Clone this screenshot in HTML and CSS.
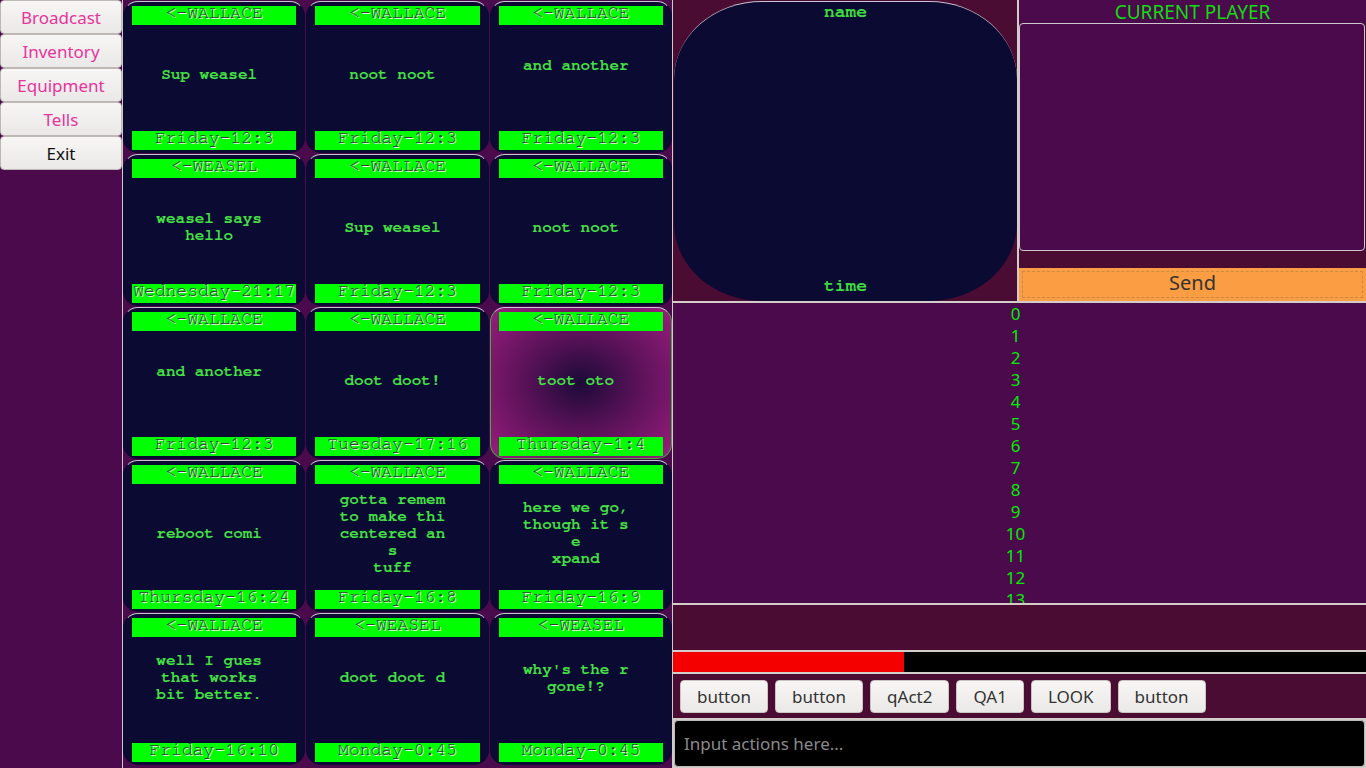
FILE: index.html
```html
<!DOCTYPE html>
<html lang="en">

<head>
    <meta charset="UTF-8">
    <meta name="viewport" content="width=device-width, initial-scale=1.0">
    <title>Chat</title>
    <link rel="stylesheet" href="styles.css">
</head>

<body>
    <div class="nav">
        <button class="nav-btn">Broadcast</button>
        <button class="nav-btn">Inventory</button>
        <button class="nav-btn">Equipment</button>
        <button class="nav-btn">Tells</button>
        <button class="nav-btn exit">Exit</button>
    </div>

    <div class="board">
        <div class="card">
            <div class="bar">&lt;-WALLACE</div>
            <div class="msg">Sup weasel</div>
            <div class="bar">Friday-12:3</div>
        </div>
        <div class="card">
            <div class="bar">&lt;-WALLACE</div>
            <div class="msg">noot noot</div>
            <div class="bar">Friday-12:3</div>
        </div>
        <div class="card">
            <div class="bar">&lt;-WALLACE</div>
            <div class="msg">and another<br>&nbsp;</div>
            <div class="bar">Friday-12:3</div>
        </div>

        <div class="card">
            <div class="bar">&lt;-WEASEL</div>
            <div class="msg">weasel says<br>hello</div>
            <div class="bar">Wednesday-21:17</div>
        </div>
        <div class="card">
            <div class="bar">&lt;-WALLACE</div>
            <div class="msg">Sup weasel</div>
            <div class="bar">Friday-12:3</div>
        </div>
        <div class="card">
            <div class="bar">&lt;-WALLACE</div>
            <div class="msg">noot noot</div>
            <div class="bar">Friday-12:3</div>
        </div>

        <div class="card">
            <div class="bar">&lt;-WALLACE</div>
            <div class="msg">and another<br>&nbsp;</div>
            <div class="bar">Friday-12:3</div>
        </div>
        <div class="card">
            <div class="bar">&lt;-WALLACE</div>
            <div class="msg">doot doot!</div>
            <div class="bar">Tuesday-17:16</div>
        </div>
        <div class="card selected">
            <div class="bar">&lt;-WALLACE</div>
            <div class="msg">toot oto</div>
            <div class="bar">Thursday-1:4</div>
        </div>

        <div class="card">
            <div class="bar">&lt;-WALLACE</div>
            <div class="msg">reboot comi</div>
            <div class="bar">Thursday-16:24</div>
        </div>
        <div class="card">
            <div class="bar">&lt;-WALLACE</div>
            <div class="msg">gotta remem<br>to make thi<br>centered an<br>s<br>tuff</div>
            <div class="bar">Friday-16:8</div>
        </div>
        <div class="card">
            <div class="bar">&lt;-WALLACE</div>
            <div class="msg">here we go,<br>though it s<br>e<br>xpand</div>
            <div class="bar">Friday-16:9</div>
        </div>

        <div class="card">
            <div class="bar">&lt;-WALLACE</div>
            <div class="msg">well I gues<br>that works<br>bit better.<br>&nbsp;</div>
            <div class="bar">Friday-16:10</div>
        </div>
        <div class="card">
            <div class="bar">&lt;-WEASEL</div>
            <div class="msg">doot doot d<br>&nbsp;</div>
            <div class="bar">Monday-0:45</div>
        </div>
        <div class="card">
            <div class="bar">&lt;-WEASEL</div>
            <div class="msg">why's the r<br>gone!?<br>&nbsp;</div>
            <div class="bar">Monday-0:45</div>
        </div>
    </div>

    <div class="side">
        <div class="top">
            <div class="name-panel">
                <div class="name-box">
                    <span>name</span>
                    <span>time</span>
                </div>
            </div>
            <div class="player-panel">
                <div class="player-title">CURRENT PLAYER</div>
                <textarea class="player-text"></textarea>
                <div class="player-gap"></div>
                <button class="send">Send</button>
            </div>
        </div>

        <div class="list">
            <div>0</div>
            <div>1</div>
            <div>2</div>
            <div>3</div>
            <div>4</div>
            <div>5</div>
            <div>6</div>
            <div>7</div>
            <div>8</div>
            <div>9</div>
            <div>10</div>
            <div>11</div>
            <div>12</div>
            <div>13</div>
        </div>

        <div class="strip"></div>

        <div class="progress">
            <div class="fill" style="width: 33.4%"></div>
        </div>

        <div class="actions">
            <button class="act">button</button>
            <button class="act">button</button>
            <button class="act">qAct2</button>
            <button class="act">QA1</button>
            <button class="act">LOOK</button>
            <button class="act">button</button>
        </div>

        <div class="input-row">
            <input type="text" class="command" placeholder="Input actions here...">
        </div>
    </div>
</body>
</html>
```

FILE: styles.css
```css
* {
    box-sizing: border-box;
}

body {
    margin: 0;
    height: 768px;
    overflow: hidden;
    display: flex;
    background-color: #4b0a4b;
    font-family: "Noto Sans", "Open Sans", sans-serif;
}

/* menu on the left */
.nav {
    width: 122px;
    display: flex;
    flex-direction: column;
}

.nav-btn {
    height: 34px;
    margin: 0;
    padding: 0;
    font-family: "Noto Sans", sans-serif;
    font-size: 17px;
    color: #e6349b;
    background: linear-gradient(#f7f6f5, #ebe9e7);
    border: 1px solid #bdb8b4;
    border-radius: 4px;
}

.nav-btn.exit {
    color: #111;
}

/* message cards */
.board {
    width: 551px;
    height: 768px;
    border-left: 1px solid #cfcac6;
    border-right: 1px solid #cfcac6;
    padding-top: 1px;
    display: grid;
    grid-template-columns: repeat(3, 1fr);
    grid-auto-rows: 152px;
    gap: 1px;
}

.card {
    display: flex;
    flex-direction: column;
    padding: 4px 8px 2px;
    background-color: #0a0a33;
    border: 1px solid #0a0a33;
    border-top-color: #c8c4d0;
    border-radius: 15px;
    font-family: "Nimbus Mono PS", "FreeMono", "Liberation Mono", "Courier New", monospace;
}

.card.selected {
    background: radial-gradient(ellipse at center, #1c0a38 0%, #5a1258 45%, #9c1d7f 100%);
    border: 1px solid #3fae3f;
    border-top-color: #c8c4d0;
}

.bar {
    height: 19px;
    line-height: 15px;
    background-color: #00ff00;
    color: #3a3a3a;
    text-shadow: 1px 1px 0 #e8ffe8;
    font-size: 18px;
    text-align: center;
    white-space: nowrap;
}

.msg {
    flex: 1;
    display: flex;
    align-items: center;
    justify-content: center;
    padding: 0 10px 8px 0;
    text-align: center;
    color: #44e044;
    font-size: 16px;
    font-weight: bold;
    line-height: 17px;
}

/* right side */
.side {
    flex: 1;
    display: flex;
    flex-direction: column;
}

.top {
    height: 303px;
    display: flex;
    border-bottom: 2px solid #d2cdc9;
}

.name-panel {
    width: 346px;
    padding: 1px 0 0 1px;
    background-color: #4b0c33;
    border-right: 2px solid #d2cdc9;
}

.name-box {
    height: 100%;
    display: flex;
    flex-direction: column;
    justify-content: space-between;
    align-items: center;
    padding: 0 0 5px;
    background-color: #0a0a33;
    border-top: 1px solid #c8c4d0;
    border-radius: 88px / 78px;
    font-family: "Nimbus Mono PS", "FreeMono", "Liberation Mono", "Courier New", monospace;
    font-size: 18px;
    font-weight: bold;
    line-height: 20px;
    color: #3fdc3f;
}

.player-panel {
    flex: 1;
    display: flex;
    flex-direction: column;
    background-color: #4b0c33;
}

.player-title {
    height: 23px;
    line-height: 25px;
    text-align: center;
    font-size: 19px;
    color: #10dd10;
    background-color: #4b0a4b;
}

.player-text {
    height: 228px;
    margin: 0 1px 0 0;
    background-color: #4b0a4b;
    border: 1px solid #cdc8cc;
    border-radius: 4px;
    resize: none;
}

.player-gap {
    height: 17px;
}

.send {
    height: 33px;
    margin: 0;
    padding: 0 0 4px;
    font-family: "Noto Sans", sans-serif;
    font-size: 20px;
    color: #333;
    background-color: #fb9d42;
    border: 1px solid #fb9d42;
    outline: 1px dashed #c98a4a;
    outline-offset: -4px;
}

.list {
    height: 302px;
    overflow: hidden;
    padding: 0 8px 0 0;
    text-align: center;
    font-size: 17px;
    line-height: 22px;
    color: #00ee00;
    border-bottom: 2px solid #d2cdc9;
}

.strip {
    height: 47px;
    background-color: #4b0c33;
    border-bottom: 2px solid #d2cdc9;
}

.progress {
    height: 22px;
    background-color: #000;
    border-bottom: 2px solid #d2cdc9;
}

.fill {
    height: 100%;
    background-color: #f50000;
}

.actions {
    height: 46px;
    display: flex;
    align-items: center;
    gap: 7px;
    padding-left: 7px;
    background-color: #4b0c33;
    border-bottom: 2px solid #d2cdc9;
}

.act {
    height: 33px;
    margin: 0;
    padding: 0 16px;
    font-family: "Noto Sans", sans-serif;
    font-size: 17px;
    color: #333;
    background: linear-gradient(#f7f6f5, #ebe9e7);
    border: 1px solid #c9c5c1;
    border-radius: 4px;
}

.input-row {
    flex: 1;
    background-color: #d2cdc9;
    padding: 0 1px 1px 1px;
}

.command {
    width: 100%;
    height: 100%;
    padding: 0 9px;
    font-family: "Noto Sans", sans-serif;
    font-size: 17px;
    color: #ddd;
    background-color: #000;
    border: 1px solid #bbb;
    border-radius: 4px;
    outline: none;
}

.command::placeholder {
    color: #8a8a8a;
}
```
